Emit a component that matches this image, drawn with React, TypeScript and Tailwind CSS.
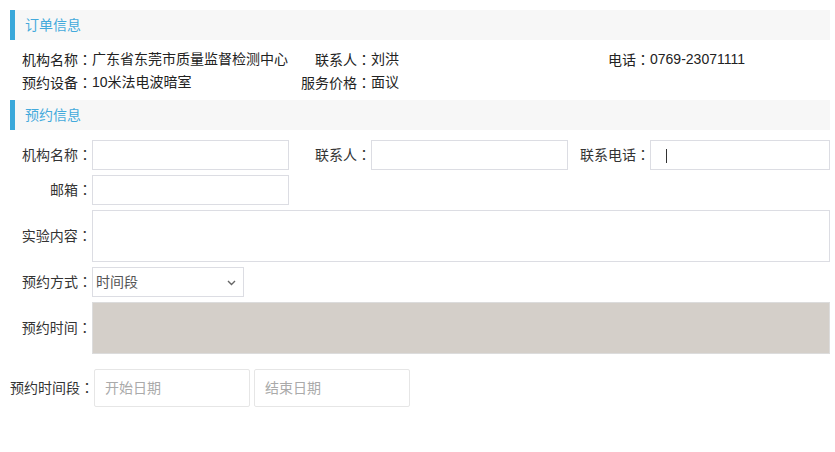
import React from 'react';

const font = { fontFamily: '"Liberation Sans", "Noto Sans CJK SC", sans-serif' };

// full-width colon drawn centred, as in the reference
const Colon: React.FC = () => (
  <span style={{ fontFamily: '"Noto Sans CJK JP", sans-serif' }}>：</span>
);

const L: React.FC<{ text: string }> = ({ text }) => (
  <>
    {text}
    <Colon />
  </>
);

const SectionTitle: React.FC<{ title: string }> = ({ title }) => (
  <div className="h-[30px] bg-[#f7f7f7] border-l-[5px] border-[#3aa8da] pl-[10px] flex items-center">
    <span className="text-[14px] text-[#44aadc]">{title}</span>
  </div>
);

const Label: React.FC<{ text: string }> = ({ text }) => (
  <div className="text-right text-[14px] text-[#333] whitespace-nowrap">
    <L text={text} />
  </div>
);

const TextInput: React.FC<{ caret?: boolean }> = ({ caret }) => (
  <div className="relative h-[30px] border border-[#dcdde3] bg-white">
    {caret && <span className="absolute left-[15px] top-[8px] w-px h-[14px] bg-[#333]" />}
  </div>
);

const App: React.FC = () => {
  return (
    <div className="w-[835px] h-[452px] bg-white" style={font}>
      <div className="w-[820px] ml-[10px] pt-[10px]">
        <SectionTitle title="订单信息" />

        <div className="grid grid-cols-[82px_197px_82px_197px_82px_1fr] pt-[8px] pb-[6px] text-[14px] text-[#222]">
          <div className="h-[23px] leading-[23px] text-right"><L text="机构名称" /></div>
          <div className="h-[23px] leading-[23px] whitespace-nowrap">广东省东莞市质量监督检测中心</div>
          <div className="h-[23px] leading-[23px] text-right"><L text="联系人" /></div>
          <div className="h-[23px] leading-[23px]">刘洪</div>
          <div className="h-[23px] leading-[23px] text-right"><L text="电话" /></div>
          <div className="h-[23px] leading-[23px]">0769-23071111</div>

          <div className="h-[23px] leading-[23px] text-right"><L text="预约设备" /></div>
          <div className="h-[23px] leading-[23px]">10米法电波暗室</div>
          <div className="h-[23px] leading-[23px] text-right whitespace-nowrap"><L text="服务价格" /></div>
          <div className="h-[23px] leading-[23px]">面议</div>
          <div />
          <div />
        </div>

        <SectionTitle title="预约信息" />

        <div className="mt-[10px] flex flex-col gap-[5px]">
          <div className="grid grid-cols-[82px_197px_82px_197px_82px_1fr] items-center">
            <Label text="机构名称" />
            <TextInput />
            <Label text="联系人" />
            <TextInput />
            <Label text="联系电话" />
            <TextInput caret />
          </div>

          <div className="grid grid-cols-[82px_197px] items-center">
            <Label text="邮箱" />
            <TextInput />
          </div>

          <div className="flex items-center">
            <div className="w-[82px]"><Label text="实验内容" /></div>
            <div className="w-[740px] h-[52px] border border-[#dcdde3] bg-white" />
          </div>

          <div className="flex items-center">
            <div className="w-[82px]"><Label text="预约方式" /></div>
            <div className="relative w-[152px] h-[30px] border border-[#dcdde3] bg-white flex items-center pl-[3px]">
              <span className="text-[14px] text-[#555]">时间段</span>
              <svg className="absolute right-[7px] top-[12px]" width="9" height="6" viewBox="0 0 9 6">
                <path d="M1 1 L4.5 4.5 L8 1" fill="none" stroke="#666" strokeWidth="1.4" />
              </svg>
            </div>
          </div>

          <div className="flex items-center">
            <div className="w-[82px]"><Label text="预约时间" /></div>
            <div className="w-[740px] h-[52px] border border-[#dcdcdc] bg-[#d4cfc9]" />
          </div>
        </div>

        <div className="mt-[15px] flex items-center">
          <div className="w-[84px] text-[14px] text-[#333] whitespace-nowrap"><L text="预约时间段" /></div>
          <div className="flex gap-[4px]">
            <div className="w-[156px] h-[38px] border border-[#e6e6e6] rounded-[2px] flex items-center pl-[10px] text-[14px] text-[#aaa]">开始日期</div>
            <div className="w-[156px] h-[38px] border border-[#e6e6e6] rounded-[2px] flex items-center pl-[10px] text-[14px] text-[#aaa]">结束日期</div>
          </div>
        </div>
      </div>
    </div>
  );
};

export default App;
